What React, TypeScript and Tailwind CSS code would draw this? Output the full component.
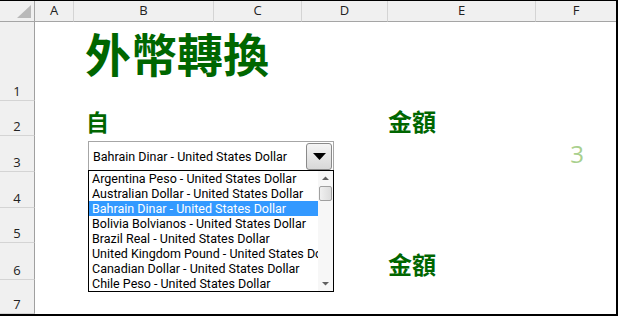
import React from 'react';

const cols = ['A', 'B', 'C', 'D', 'E', 'F'];
const rows = [1, 2, 3, 4, 5, 6, 7];

const items = [
  'Argentina Peso - United States Dollar',
  'Australian Dollar - United States Dollar',
  'Bahrain Dinar - United States Dollar',
  'Bolivia Bolvianos - United States Dollar',
  'Brazil Real - United States Dollar',
  'United Kingdom Pound - United States Dollar',
  'Canadian Dollar - United States Dollar',
  'Chile Peso - United States Dollar',
];

const ui = { fontFamily: '"Open Sans", "Noto Sans", sans-serif' };
const cjk = { fontFamily: '"Noto Sans CJK TC", "Noto Sans", sans-serif' };
const listFont = { fontFamily: 'Roboto, "Noto Sans", "Noto Sans CJK TC", sans-serif' };

function Corner() {
  return (
    <div className="bg-[#f0f0f0] border-r border-b border-[#a5a5a5] flex items-end justify-end pr-[3px] pb-[3px]">
      <svg width="14" height="13" viewBox="0 0 14 13">
        <polygon points="14,0 14,13 0,13" fill="#b9b9b9" />
      </svg>
    </div>
  );
}

export default function App() {
  return (
    <div className="w-[618px] h-[316px] bg-white border-t border-r-2 border-b-2 border-black relative overflow-hidden">
      <div className="grid grid-cols-[35px_39px_140px_88px_86px_148px_1fr] grid-rows-[21px_79px_35px_36px_36px_35px_37px_1fr] h-full">
        <Corner />
        {cols.map((c, i) => (
          <div
            key={c}
            style={ui}
            className={`bg-[#f0f0f0] border-b border-[#a5a5a5] flex items-center justify-center text-[13px] text-[#222] ${i < cols.length - 1 ? 'border-r border-r-[#d4d4d4]' : ''}`}
          >
            {c}
          </div>
        ))}

        {rows.map((r) => (
          <React.Fragment key={r}>
            <div
              style={ui}
              className="col-start-1 bg-[#f0f0f0] border-r border-[#a0a0a0] border-b border-b-[#d4d4d4] flex items-end justify-center pb-[2px] text-[13px] text-[#222] leading-none"
            >
              {r}
            </div>
            {r === 1 && (
              <div className="col-span-6 flex items-end pl-[50px] pb-[26px]">
                <span style={cjk} className="text-[46px] leading-none font-bold text-[#006600]">外幣轉換</span>
              </div>
            )}
            {r === 2 && (
              <>
                <div />
                <div className="col-span-3 flex items-end pl-[12px] pb-[3px]">
                  <span style={cjk} className="text-[23px] leading-none font-bold text-[#006600]">自</span>
                </div>
                <div className="col-span-2 flex items-end pb-[3px]">
                  <span style={cjk} className="text-[24px] leading-none font-bold text-[#006600]">金額</span>
                </div>
              </>
            )}
            {r === 3 && (
              <>
                <div className="col-span-5" />
                <div className="flex items-center justify-center pl-[2px]">
                  <span style={ui} className="text-[24px] leading-none text-[#a9d08e]">3</span>
                </div>
              </>
            )}
            {(r === 4 || r === 5 || r === 7) && <div className="col-span-6" />}
            {r === 6 && (
              <>
                <div className="col-span-4" />
                <div className="col-span-2 flex items-end pb-[4px]">
                  <span style={cjk} className="text-[24px] leading-none font-bold text-[#006600]">金額</span>
                </div>
              </>
            )}
          </React.Fragment>
        ))}
      </div>

      {/* combo box overlay */}
      <div className="absolute left-[88px] top-[140px] w-[246px]">
        <div className="h-[29px] border border-[#a6a6a6] border-b-0 bg-white flex items-center">
          <span style={listFont} className="pl-[4px] text-[12.5px] leading-[15px] text-black flex-1 whitespace-nowrap">
            Bahrain Dinar - United States Dollar
          </span>
          <div className="w-[26px] h-[27px] mr-[1px] rounded-[3px] border border-[#8a8a8a] bg-gradient-to-b from-[#f4f4f4] to-[#d8d8d8] flex items-center justify-center">
            <svg width="13" height="7" viewBox="0 0 13 7">
              <polygon points="0,0 13,0 6.5,7" fill="#000" />
            </svg>
          </div>
        </div>
        <div className="h-[122px] border border-black bg-white flex">
          <div className="flex-1 overflow-hidden">
            {items.map((t, i) => (
              <div
                key={t}
                style={listFont}
                className={`h-[15px] leading-[15px] pl-[3px] text-[12.5px] overflow-hidden whitespace-nowrap ${i === 2 ? 'bg-[#3399ff] text-white' : 'text-black'}`}
              >
                {t}
              </div>
            ))}
          </div>
          <div className="w-[15px] bg-[#f7f7f7] flex flex-col items-center">
            <svg width="15" height="15" viewBox="0 0 15 15">
              <polygon points="4,9 11,9 7.5,5.5" fill="#606060" />
            </svg>
            <div className="w-[13px] h-[15px] rounded-[2px] border border-[#a0a0a0] bg-gradient-to-r from-[#f0f0f0] to-[#dcdcdc]" />
            <div className="flex-1" />
            <svg width="15" height="15" viewBox="0 0 15 15">
              <polygon points="4,6 11,6 7.5,9.5" fill="#606060" />
            </svg>
          </div>
        </div>
      </div>
    </div>
  );
}
